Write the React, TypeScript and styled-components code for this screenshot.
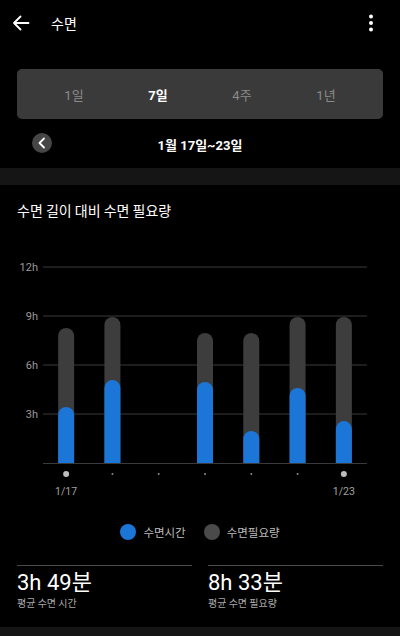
import React from "react";
import styled, { createGlobalStyle } from "styled-components";

const Global = createGlobalStyle`
  html, body { margin: 0; padding: 0; background: #000; }
  body { font-family: Roboto, "Noto Sans CJK KR", sans-serif; color: #fff; }
  * { box-sizing: border-box; }
`;

const Page = styled.div`
  width: 400px;
  height: 636px;
  background: #000;
  display: flex;
  flex-direction: column;
  overflow: hidden;
`;

const Header = styled.header`
  height: 45px;
  display: flex;
  align-items: center;
  padding: 0 26px 0 12px;
`;

const IconButton = styled.button`
  background: none;
  border: none;
  padding: 0;
  display: flex;
  align-items: center;
  justify-content: center;
  color: #fff;
`;

const Title = styled.h1`
  margin: 0 0 0 21px;
  font-family: "Noto Sans CJK KR", sans-serif;
  font-size: 14px;
  font-weight: 400;
  flex: 1;
`;

const PeriodWrap = styled.div`
  padding: 24px 17px 0;
`;

const Segmented = styled.div`
  height: 50px;
  background: #3a3a3a;
  border-radius: 5px;
  display: grid;
  grid-template-columns: repeat(4, 84px);
  justify-content: center;
  align-items: center;
`;

const Segment = styled.div<{ $active?: boolean }>`
  text-align: center;
  font-family: Roboto, "Noto Sans CJK KR", sans-serif;
  font-size: 13px;
  font-weight: ${(p) => (p.$active ? 700 : 400)};
  color: ${(p) => (p.$active ? "#fff" : "#8a8a8a")};
`;

const DateRow = styled.div`
  height: 49px;
  position: relative;
  display: flex;
  align-items: center;
  justify-content: center;
  padding: 2px 32px 0;
`;

const PrevButton = styled.button`
  position: absolute;
  left: 32px;
  top: 14px;
  width: 20px;
  height: 20px;
  border-radius: 50%;
  border: none;
  padding: 0;
  background: #464646;
  display: flex;
  align-items: center;
  justify-content: center;
`;

const DateText = styled.div`
  font-family: Roboto, "Noto Sans CJK KR", sans-serif;
  font-size: 13px;
  font-weight: 700;
  color: #fff;
`;

const Band = styled.div<{ $h: number }>`
  height: ${(p) => p.$h}px;
  background: #151515;
  flex-shrink: 0;
`;

const SectionTitle = styled.h2`
  margin: 0;
  padding: 15px 17px 0;
  font-family: "Noto Sans CJK KR", sans-serif;
  font-size: 14px;
  line-height: 20px;
  font-weight: 400;
  color: #fff;
`;

const ChartBox = styled.div`
  margin-top: 30px;
  height: 251px;
`;

const Legend = styled.div`
  margin-top: 19px;
  height: 24px;
  display: flex;
  justify-content: center;
  align-items: center;
  gap: 18px;
`;

const LegendItem = styled.div`
  display: flex;
  align-items: center;
  gap: 7px;
  font-family: "Noto Sans CJK KR", sans-serif;
  font-size: 11.5px;
  color: #bdbdbd;
`;

const Swatch = styled.span<{ $color: string }>`
  width: 16px;
  height: 16px;
  border-radius: 50%;
  background: ${(p) => p.$color};
`;

const Stats = styled.div`
  margin-top: 21px;
  padding: 0 17px;
  display: grid;
  grid-template-columns: 1fr 1fr;
  column-gap: 16px;
`;

const Stat = styled.div`
  border-top: 1px solid #4a4a4a;
  padding-top: 3px;
`;

const StatValue = styled.div`
  font-family: Roboto, "Noto Sans CJK KR", sans-serif;
  font-size: 22px;
  line-height: 27px;
  color: #fff;
`;

const StatLabel = styled.div`
  font-family: "Noto Sans CJK KR", sans-serif;
  font-size: 10px;
  line-height: 14px;
  color: #a8a8a8;
`;

const Spacer = styled.div`
  flex: 1;
`;

const data: { need: number; sleep: number }[] = [
  { need: 8.27, sleep: 3.43 },
  { need: 8.94, sleep: 5.08 },
  { need: 0, sleep: 0 },
  { need: 7.96, sleep: 4.96 },
  { need: 7.96, sleep: 1.96 },
  { need: 8.94, sleep: 4.6 },
  { need: 8.94, sleep: 2.57 },
];

const base = 213;
const perHour = 16.33;
const x0 = 43;
const x1 = 367;
const step = (x1 - x0) / 7;

function barPath(cx: number, top: number, w: number) {
  const r = w / 2;
  const l = cx - r;
  const rr = cx + r;
  return `M${l} ${base} L${l} ${top + r} A${r} ${r} 0 0 1 ${rr} ${top + r} L${rr} ${base} Z`;
}

const Chart = () => (
  <svg width="400" height="251" viewBox="0 0 400 251">
    {[12, 9, 6, 3].map((h) => {
      const y = base - h * perHour;
      return (
        <g key={h}>
          <line x1={x0} x2={x1} y1={y} y2={y} stroke="#3a3a3a" strokeWidth="1" />
          <text x="38" y={y + 4} textAnchor="end" fontSize="11" fill="#9a9a9a" fontFamily="Roboto, sans-serif">
            {h}h
          </text>
        </g>
      );
    })}
    <line x1={x0} x2={x1} y1={base + 0.5} y2={base + 0.5} stroke="#3a3a3a" strokeWidth="1" />
    {data.map((d, i) => {
      const cx = x0 + step * (i + 0.5);
      const big = i === 0 || i === 6;
      return (
        <g key={i}>
          {d.need > 0 && <path d={barPath(cx, base - d.need * perHour, 16)} fill="#3d3d3d" />}
          {d.sleep > 0 && <path d={barPath(cx, base - d.sleep * perHour, 16)} fill="#1b76d8" />}
          <circle cx={cx} cy={224} r={big ? 3 : 1} fill={big ? "#bdbdbd" : "#8a8a8a"} />
        </g>
      );
    })}
    <text x={x0 + step * 0.5} y={245} textAnchor="middle" fontSize="10.5" fill="#a0a0a0" fontFamily="Roboto, sans-serif">
      1/17
    </text>
    <text x={x0 + step * 6.5} y={245} textAnchor="middle" fontSize="10.5" fill="#a0a0a0" fontFamily="Roboto, sans-serif">
      1/23
    </text>
  </svg>
);

export default function App() {
  return (
    <Page>
      <Global />
      <Header>
        <IconButton aria-label="back">
          <svg width="18" height="18" viewBox="0 0 18 18" fill="none" stroke="#fff" strokeWidth="1.8" strokeLinecap="round" strokeLinejoin="round">
            <path d="M16.5 9H2M8.5 2.5L2 9l6.5 6.5" />
          </svg>
        </IconButton>
        <Title>수면</Title>
        <IconButton aria-label="more">
          <svg width="6" height="20" viewBox="0 0 6 20" fill="#fff">
            <circle cx="3" cy="3.5" r="2" />
            <circle cx="3" cy="10" r="2" />
            <circle cx="3" cy="16.5" r="2" />
          </svg>
        </IconButton>
      </Header>
      <PeriodWrap>
        <Segmented>
          <Segment>1일</Segment>
          <Segment $active>7일</Segment>
          <Segment>4주</Segment>
          <Segment>1년</Segment>
        </Segmented>
      </PeriodWrap>
      <DateRow>
        <PrevButton aria-label="previous">
          <svg width="10" height="12" viewBox="0 0 10 12" fill="none" stroke="#fff" strokeWidth="1.8" strokeLinecap="round" strokeLinejoin="round">
            <path d="M7 1.5L2.5 6 7 10.5" />
          </svg>
        </PrevButton>
        <DateText>1월 17일~23일</DateText>
      </DateRow>
      <Band $h={17} />
      <SectionTitle>수면 길이 대비 수면 필요량</SectionTitle>
      <ChartBox>
        <Chart />
      </ChartBox>
      <Legend>
        <LegendItem>
          <Swatch $color="#1b76d8" />
          수면시간
        </LegendItem>
        <LegendItem>
          <Swatch $color="#4a4a4a" />
          수면필요량
        </LegendItem>
      </Legend>
      <Stats>
        <Stat>
          <StatValue>3h 49분</StatValue>
          <StatLabel>평균 수면 시간</StatLabel>
        </Stat>
        <Stat>
          <StatValue>8h 33분</StatValue>
          <StatLabel>평균 수면 필요량</StatLabel>
        </Stat>
      </Stats>
      <Spacer />
      <Band $h={9} />
    </Page>
  );
}
